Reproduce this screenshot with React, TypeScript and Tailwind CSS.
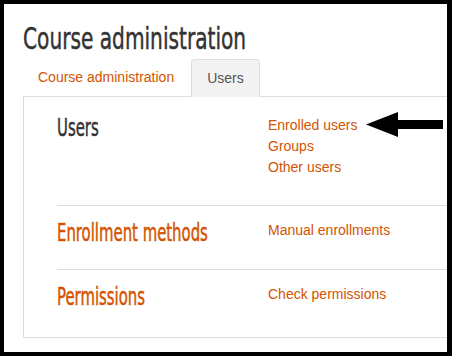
import { FC } from "react";

const heading =
  "[font-family:'DejaVu_Sans',sans-serif] [-webkit-text-stroke:0.5px_currentColor] inline-block whitespace-nowrap origin-left";
const body = "[font-family:'Liberation_Sans',Arial,sans-serif]";

interface Section {
  title: string;
  links: string[];
  muted?: boolean;
}

const sections: Section[] = [
  { title: "Users", links: ["Enrolled users", "Groups", "Other users"], muted: true },
  { title: "Enrollment methods", links: ["Manual enrollments"] },
  { title: "Permissions", links: ["Check permissions"] },
];

// the hand-drawn arrow pointing at "Enrolled users"
const Arrow: FC = () => (
  <svg width="77" height="25" viewBox="0 0 77 25" className="absolute left-[362px] top-[108px]">
    <polygon points="0,12.5 32,0 32,8 77,8 77,17 32,17 32,25" fill="#000" />
  </svg>
);

const App: FC = () => {
  return (
    <div className="w-[452px] h-[356px] bg-black pt-[4px] pl-[4px] pr-[5px] pb-[4px]">
      <div className={cx("relative w-full h-full bg-white overflow-hidden pl-[19px]", body)}>
        <div className="mt-[16px] h-[36px]">
          <h1 className={cx("text-[31px] leading-[36px] text-[#333] scale-x-[0.65]", heading)}>
            Course administration
          </h1>
        </div>
        <div className="mt-[3px] flex items-end border-b border-[#ddd] w-[500px] text-[14px]">
          <div className="px-[15px] h-[37px] flex items-center text-[#d35400]">Course administration</div>
          <div className="ml-[2px] px-[15px] h-[38px] -mb-px flex items-center bg-[#f2f2f2] border border-[#ddd] border-b-transparent rounded-t-[4px] text-[#555]">
            Users
          </div>
        </div>
        <div className="w-[500px] border-l border-b border-[#ddd] pl-[33px] pt-[4px]">
          {sections.map((s, i) => (
            <div
              key={s.title}
              className={cx(
                "flex border-[#ddd]",
                i > 0 && "border-t",
                i === 0 && "h-[104px] pt-[14px]",
                i === 1 && "h-[64px] pt-[14px]",
                i === 2 && "h-[68px] pt-[14px]"
              )}
            >
              <div className="w-[211px] -mt-[2px] h-[30px]">
                <span
                  className={cx(
                    "text-[24px] leading-[30px] scale-x-[0.62]",
                    heading,
                    s.muted ? "text-[#333]" : "text-[#d35400]"
                  )}
                >
                  {s.title}
                </span>
              </div>
              <div className="flex flex-col text-[14px] leading-[21px] text-[#d35400]">
                {s.links.map((l) => (
                  <span key={l}>{l}</span>
                ))}
              </div>
            </div>
          ))}
        </div>
        <Arrow />
      </div>
    </div>
  );
};

function cx(...parts: (string | false | undefined)[]) {
  return parts.filter(Boolean).join(" ");
}

export default App;
